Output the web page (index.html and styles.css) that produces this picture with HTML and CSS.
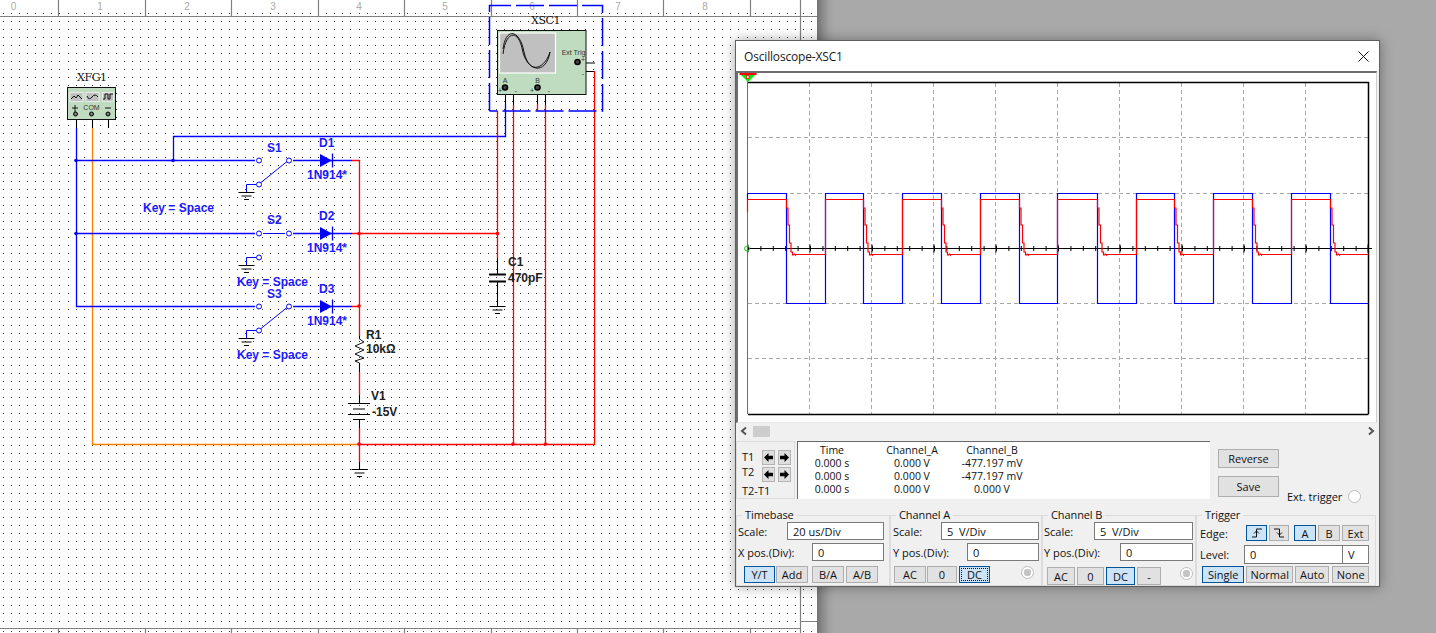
FILE: index.html
```html
<!DOCTYPE html>
<html lang="en">
<head>
<meta charset="utf-8">
<title>Oscilloscope-XSC1</title>
<link rel="stylesheet" href="styles.css">
</head>
<body>
<div class="workspace">
  <svg class="canvas" width="817" height="633" viewBox="0 0 817 633" xmlns="http://www.w3.org/2000/svg">
    <defs>
      <pattern id="dots" width="97" height="8" patternUnits="userSpaceOnUse">
        <path class="dot" d="M3 5h1v1h-1zM11 5h1v1h-1zM19 5h1v1h-1zM27 5h1v1h-1zM35 5h1v1h-1zM43 5h1v1h-1zM51 5h1v1h-1zM59 5h1v1h-1zM68 5h1v1h-1zM76 5h1v1h-1zM84 5h1v1h-1zM92 5h1v1h-1z"/>
      </pattern>
      <g id="gnd">
        <path class="wk" d="M-8 .5H8M-5 4H5M-2.500 7.500H2.500"/>
      </g>
      <g id="diode">
        <path class="fill-blue" d="M0 -6.500V6.500L12 0z"/>
        <path class="wb" d="M12.500 -7V7"/>
      </g>
    </defs>
    <rect class="paper" width="817" height="633"/>
    <rect fill="url(#dots)" y="10" width="800" height="612"/>
    <rect fill="url(#dots)" x="801" y="10" width="16" height="612"/>
    <g transform="translate(0,2)"><rect fill="url(#dots)" y="627" width="817" height="6"/></g>

    <g class="rule">
      <path d="M0 16.500H817M800.500 0V633M0 628.500H800M801 621.500H817"/>
      <path d="M58.500 0V16M145.500 0V16M231.500 0V16M318.500 0V16M404.500 0V16M491.500 0V16M577.500 0V16M663.500 0V16M750.500 0V16"/>
      <path d="M58.500 629V633M145.500 629V633M231.500 629V633M318.500 629V633M404.500 629V633M491.500 629V633M577.500 629V633M663.500 629V633M750.500 629V633"/>
    </g>
    <g class="rulertext">
      <text x="13.500" y="10">0</text><text x="100" y="10">1</text><text x="187" y="10">2</text><text x="273" y="10">3</text><text x="359" y="10">4</text><text x="445" y="10">5</text><text x="532" y="10">6</text><text x="618" y="10">7</text><text x="705" y="10">8</text>
    </g>

    <!-- wires -->
    <path class="wo" d="M92.500 128V444.500H358"/>
    <path class="wb" d="M76.500 128V306.500H255M76.500 160.500H255M76.500 233.500H255M173.500 160.500V136.500H505.500V104"/>
    <path class="wb" d="M293 160.500H352M293 233.500H352M293 306.500H352"/>
    <path class="wr" d="M352 160.500H359.500V336M359.500 372V395M359.500 428V462M352 306.500H359.500M352 233.500H497.500M358 444.500H594.500V71M513.500 444.500V105M545.500 444.500V105M497.500 111V258M537.500 104V111"/>
    <path class="wk" d="M76.500 114V128M92.500 114V128M108.500 114V128M497.500 258V274M497.500 282V306M505.500 88V104M513.500 88V105M505.500 88H513.500M537.500 88V104M545.500 88V105M537.500 88H545.500M578.500 63H595M578.500 63V71.500H594M359.500 336V339M359.500 363V372M359.500 395V403M359.500 419V428M359.500 462V469"/>
    <!-- junctions -->
    <g class="fill-blue"><circle cx="76" cy="160.500" r="1.800"/><circle cx="76" cy="233.500" r="1.800"/><circle cx="173" cy="160.500" r="1.800"/></g>
    <g class="fill-red"><circle cx="359" cy="233.500" r="1.800"/><circle cx="359" cy="306" r="1.800"/><circle cx="359" cy="444" r="1.800"/><circle cx="513" cy="444" r="1.800"/><circle cx="545.500" cy="444" r="1.800"/><circle cx="497.500" cy="233.500" r="1.800"/></g>

    <!-- switches -->
    <g class="wbt">
      <path d="M261 182.500L287 161.500M261 328.500L287 307.500M263 233.500H285"/>
      <path d="M246.500 192V184.500H256M246.500 265V257.500H256M246.500 338V330.500H256"/>
      <circle class="term" cx="259" cy="160.500" r="2.500"/><circle class="term" cx="289" cy="160.500" r="2.500"/><circle class="term" cx="259" cy="184.500" r="2.500"/>
      <circle class="term" cx="259" cy="233.500" r="2.500"/><circle class="term" cx="289" cy="233.500" r="2.500"/><circle class="term" cx="259" cy="257.500" r="2.500"/>
      <circle class="term" cx="259" cy="306.500" r="2.500"/><circle class="term" cx="289" cy="306.500" r="2.500"/><circle class="term" cx="259" cy="330.500" r="2.500"/>
    </g>
    <use href="#gnd" x="246.500" y="192"/><use href="#gnd" x="246.500" y="265"/><use href="#gnd" x="246.500" y="338"/>
    <use href="#gnd" x="497.500" y="306"/><use href="#gnd" x="359.500" y="469"/>
    <use href="#diode" x="320" y="160.500"/><use href="#diode" x="320" y="233.500"/><use href="#diode" x="320" y="306.500"/>

    <!-- passive parts -->
    <path class="wkt" d="M359.500 339L364 342L355 346L364 350L355 354L364 358L355 361L359.500 363"/>
    <path class="wk2" d="M489 274.500H506M489 281.500H506"/>
    <path class="wk" d="M348 403.500H370M353 409H365M348 414.500H370M353 419.500H365"/>

    <!-- function generator -->
    <rect class="inst" x="67.500" y="87.500" width="48" height="32"/>
    <g class="instbtn"><rect x="70" y="92.500" width="13" height="9"/><rect x="86" y="92.500" width="13" height="9"/><rect x="102.500" y="92.500" width="11" height="9"/></g>
    <path class="wkt" d="M71 99L74 96L76 98L78 95L82 99M87 96Q89 101 92 97Q95 93 98 97M103 99H105V94H108V99H110V94H113"/>
    <path class="wkt" d="M72 108H78M75 105V114M105 108H111"/>
    <text class="tiny" x="91.500" y="110">COM</text>
    <g class="pin"><circle cx="75.500" cy="114" r="2"/><circle cx="91.500" cy="114" r="2"/><circle cx="108" cy="114" r="2"/></g>
    <text class="lab-serif" x="77" y="81">XFG1</text>

    <!-- oscilloscope icon -->
    <path class="sel" d="M489.500 111V5.500H602.500V111H489.500"/>
    <rect class="inst" x="497.500" y="30.500" width="88.500" height="64"/>
    <rect class="scr" x="499.500" y="33" width="56" height="40"/>
    <path class="wkt" d="M503 54C506 30 518 30 522 48C526 72 546 76 550 52M503 49C506 26 520 30 524 52C530 78 546 66 550 52"/>
    <text class="tiny" x="573.500" y="55">Ext Trig</text>
    <text class="tiny" x="505" y="83">A</text>
    <text class="tiny" x="537.500" y="83">B</text>
    <text class="tiny" x="500" y="93">+</text><text class="tiny" x="516" y="93">-</text>
    <text class="tiny" x="532" y="93">+</text><text class="tiny" x="549" y="93">-</text>
    <text class="tiny" x="583" y="62">+</text><text class="tiny" x="583" y="76">-</text>
    <g class="pinb"><circle cx="505" cy="87.500" r="2.500"/><circle cx="537.500" cy="87.500" r="2.500"/><circle cx="577.500" cy="62" r="2.500"/></g>
    <text class="lab-serif" x="531" y="24">XSC1</text>

    <!-- labels -->
    <g class="lab-blue">
      <text x="267" y="152">S1</text><text x="319" y="147">D1</text><text x="307" y="179">1N914*</text><text x="143" y="212">Key = Space</text>
      <text x="267" y="224">S2</text><text x="319" y="220">D2</text><text x="307" y="252">1N914*</text><text x="237" y="286">Key = Space</text>
      <text x="267" y="298">S3</text><text x="319" y="293">D3</text><text x="307" y="325">1N914*</text><text x="237" y="359">Key = Space</text>
    </g>
    <g class="lab-black">
      <text x="366" y="339">R1</text><text x="366" y="353">10kΩ</text><text x="371" y="400">V1</text><text x="372" y="416">-15V</text><text x="508" y="266">C1</text><text x="508" y="282">470pF</text>
    </g>
  </svg>
  <div class="desk"></div>
</div>

<section class="window">
  <header class="titlebar">
    <span>Oscilloscope-XSC1</span>
    <svg class="close" width="11" height="11" viewBox="0 0 11 11"><path d="M.5 .5L10.500 10.500M10.500 .5L.5 10.500"/></svg>
  </header>

  <div class="screen">
    <svg width="638" height="350" viewBox="738 73 638 350" xmlns="http://www.w3.org/2000/svg">
      <path class="griddash" d="M809.500 83V414M871.500 83V414M933.500 83V414M995.500 83V414M1057.500 83V414M1119.500 83V414M1181.500 83V414M1243.500 83V414M1305.500 83V414M748 137.500H1368M748 193.500H1368M748 303.500H1368M748 358.500H1368"/>
      <path class="plotframe" d="M748 82.500H1368.500V414M748 414.500H1368.500"/>
      <path class="tick-minor" d="M748 248.500H1368"/>
      <path class="tick-major" d="M748 248.500H1368"/>
      <path class="axis" d="M748 248.500H1372"/>
      <path class="mag" d="M747.500 78V414"/>
      <path class="trace-b" d="M747.500 199V193.500H786.500V303.500H825.500V193.500H863.500V303.500H902.500V193.500H941.500V303.500H980.500V193.500H1019.500V303.500H1057.500V193.500H1097.500V303.500H1136.500V193.500H1174.500V303.500H1213.500V193.500H1252.500V303.500H1291.500V193.500H1330.500V303.500H1368.500"/>
      <path class="trace-a" d="M747.500 212V199.500H786.500V208h1.500V225h1.500V243h1.500V252h1.500V255h1l1 -1l1 1V254.500H825.500V199.500H863.500V208h1.500V225h1.500V243h1.500V252h1.500V255h1l1 -1l1 1V254.500H902.500V199.500H941.500V208h1.500V225h1.500V243h1.500V252h1.500V255h1l1 -1l1 1V254.500H980.500V199.500H1019.500V208h1.500V225h1.500V243h1.500V252h1.500V255h1l1 -1l1 1V254.500H1057.500V199.500H1097.500V208h1.500V225h1.500V243h1.500V252h1.500V255h1l1 -1l1 1V254.500H1136.500V199.500H1174.500V208h1.500V225h1.500V243h1.500V252h1.500V255h1l1 -1l1 1V254.500H1213.500V199.500H1252.500V208h1.500V225h1.500V243h1.500V252h1.500V255h1l1 -1l1 1V254.500H1291.500V199.500H1330.500V208h1.500V225h1.500V243h1.500V252h1.500V255h1l1 -1l1 1V254.500H1368.500"/>
      <circle class="trigmark" cx="747" cy="248.500" r="2.500"/>
      <path class="mk-green" d="M740 74H756L748 82z"/>
      <path class="mk-red" d="M739.500 74H756.500"/>
      <rect class="mk-box" x="746.500" y="75.500" width="2.500" height="3"/>
    </svg>
  </div>

  <div class="hscroll">
    <svg width="10" height="10" viewBox="0 0 10 10"><path class="chev" d="M7 1.500L3 5L7 8.500"/></svg>
    <span class="thumb"></span>
    <svg class="hscroll-right" width="10" height="10" viewBox="0 0 10 10"><path class="chev" d="M3 1.500L7 5L3 8.500"/></svg>
  </div>

  <div class="mid">
    <div class="cursors">
      <div class="cursor-row">
        <span>T1</span>
        <button class="arrow"><svg width="10" height="10" viewBox="0 0 10 10"><path d="M0 5L5 0V3H10V7H5V10z"/></svg></button>
        <button class="arrow"><svg width="10" height="10" viewBox="0 0 10 10"><path d="M10 5L5 0V3H0V7H5V10z"/></svg></button>
      </div>
      <div class="cursor-row">
        <span>T2</span>
        <button class="arrow"><svg width="10" height="10" viewBox="0 0 10 10"><path d="M0 5L5 0V3H10V7H5V10z"/></svg></button>
        <button class="arrow"><svg width="10" height="10" viewBox="0 0 10 10"><path d="M10 5L5 0V3H0V7H5V10z"/></svg></button>
      </div>
      <div class="cursor-diff">T2-T1</div>
    </div>
    <div class="readout">
      <span>Time</span><span>Channel_A</span><span>Channel_B</span>
      <span>0.000 s</span><span>0.000 V</span><span>-477.197 mV</span>
      <span>0.000 s</span><span>0.000 V</span><span>-477.197 mV</span>
      <span>0.000 s</span><span>0.000 V</span><span>0.000 V</span>
    </div>
    <div class="side">
      <button class="btn side-btn">Reverse</button>
      <div class="side-low">
        <button class="btn side-btn save">Save</button>
        <div class="ext"><span>Ext. trigger</span><i class="led big"></i></div>
      </div>
    </div>
  </div>

  <div class="controls">
    <fieldset class="group g-time">
      <legend>Timebase</legend>
      <div class="row"><label>Scale:</label><input class="field f97" value="20 us/Div"></div>
      <div class="row r2"><label>X pos.(Div):</label><input class="field f72" value="0"></div>
      <div class="btns btns-time">
        <button class="btn on">Y/T</button><button class="btn">Add</button><button class="btn">B/A</button><button class="btn">A/B</button>
      </div>
    </fieldset>
    <fieldset class="group g-a">
      <legend>Channel A</legend>
      <div class="row"><label>Scale:</label><input class="field f98" value="5  V/Div"></div>
      <div class="row r2"><label>Y pos.(Div):</label><input class="field f72" value="0"></div>
      <div class="btns btns-a">
        <button class="btn">AC</button><button class="btn">0</button><button class="btn on focus">DC</button><i class="led dot-led"></i>
      </div>
    </fieldset>
    <fieldset class="group g-b">
      <legend>Channel B</legend>
      <div class="row"><label>Scale:</label><input class="field f99" value="5  V/Div"></div>
      <div class="row r2"><label>Y pos.(Div):</label><input class="field f73" value="0"></div>
      <div class="btns btns-b">
        <button class="btn">AC</button><button class="btn">0</button><button class="btn on">DC</button><button class="btn">-</button><i class="led dot-led"></i>
      </div>
    </fieldset>
    <fieldset class="group g-trig">
      <legend>Trigger</legend>
      <div class="row edge-row">
        <label>Edge:</label>
        <div class="edge-btns">
          <button class="btn on"><svg width="12" height="10" viewBox="0 0 12 10"><path d="M1 9H5.500V1H11M3 5.500L5.500 3L8 5.500"/></svg></button>
          <button class="btn"><svg width="12" height="10" viewBox="0 0 12 10"><path d="M1 1H6.500V9H11M4 4.500L6.500 7L9 4.500"/></svg></button>
          <button class="btn on">A</button><button class="btn">B</button><button class="btn">Ext</button>
        </div>
      </div>
      <div class="row level-row">
        <label>Level:</label>
        <div class="level-fields"><input class="field f-level" value="0"><input class="field f-unit" value="V"></div>
      </div>
      <div class="btns btns-trig">
        <button class="btn on">Single</button><button class="btn">Normal</button><button class="btn">Auto</button><button class="btn">None</button>
      </div>
    </fieldset>
  </div>
</section>
</body>
</html>
```
FILE: styles.css
```css
* { box-sizing: border-box; }
html, body { margin: 0; height: 633px; overflow: hidden; }
body { font-family: "Open Sans", "Noto Sans", sans-serif; font-size: 11px; color: #111; background: #a9a9a9; }

.workspace { display: flex; height: 633px; }
.canvas { flex: none; display: block; }
.desk { flex: 1; background: linear-gradient(90deg, #737373 0, #8c8c8c 6px, #a0a0a0 12px, #a9a9a9 18px); }

.paper { fill: #fff; }
.dot { fill: #333; shape-rendering: crispEdges; }
.rule path { fill: none; stroke: #808080; stroke-width: 1.2; }
.rulertext text { font: 10px "Liberation Sans", sans-serif; fill: #aaa; text-anchor: middle; }

.wb, .wr, .wo, .wk, .wbt, .wkt, .wk2, .sel { fill: none; }
.wb { stroke: #0000ff; stroke-width: 1.3; }
.wbt { stroke: #0000ff; stroke-width: 1; }
.wr { stroke: #ff0000; stroke-width: 1.3; }
.wo { stroke: #ff8000; stroke-width: 1.3; }
.wk { stroke: #000; stroke-width: 1.1; }
.wkt { stroke: #111; stroke-width: 1; }
.wk2 { stroke: #000; stroke-width: 2; }
.fill-blue { fill: #0000ff; }
.fill-red { fill: #ff0000; }
.term { fill: #fff; stroke: #0000ff; }
.sel { stroke: #0000ff; stroke-width: 1.5; stroke-dasharray: 28 5; }
.inst { fill: #bfdcc0; stroke: #111; stroke-width: 1; }
.instbtn rect { fill: #c0c0c0; stroke: #f2f2f2; stroke-width: .8; }
.scr { fill: #c0c0c0; stroke: #fff; stroke-width: 1.2; }
.pin circle { fill: #7a7a7a; stroke: #000; stroke-width: 1; }
.pinb circle { fill: #444; stroke: #000; stroke-width: 1.6; }
.tiny { font: 7px "Liberation Sans", sans-serif; fill: #333; text-anchor: middle; }
.lab-serif { font: 11px "DejaVu Serif", "Liberation Serif", serif; fill: #111; letter-spacing: -.4px; }
.lab-blue text { font: bold 12px "Liberation Sans", sans-serif; fill: #1a1aff; }
.lab-black text { font: bold 12px "Liberation Sans", sans-serif; fill: #222; }

.window {
  position: absolute; left: 735px; top: 40px; width: 645px; height: 547px;
  background: #f0f0f0; border: 1px solid #5f5f5f;
  box-shadow: 0 0 12px rgba(0, 0, 0, .35);
  display: flex; flex-direction: column;
}
.titlebar {
  flex: none; height: 30px; background: #fff; display: flex; align-items: center;
  justify-content: space-between; padding: 0 10px 0 8px; font-size: 12px; letter-spacing: -.17px; color: #1a1a1a;
}
.close { display: block; }
.close path { fill: none; stroke: #111; stroke-width: 1; }

.screen {
  flex: none; height: 352px; margin: 0 2px 0 0; background: #fff;
  border-top: 2px solid #6d6d6d; border-left: 2px solid #6d6d6d; border-right: 1px solid #d0d0d0; border-bottom: 1px solid #e8e8e8;
}
.screen svg { display: block; }
.griddash { fill: none; stroke: #a8a8a8; stroke-width: 1; stroke-dasharray: 4 3; }
.plotframe { fill: none; stroke: #000; stroke-width: 1.5; }
.axis { fill: none; stroke: #000; stroke-width: 1.2; }
.tick-minor { fill: none; stroke: #000; stroke-width: 5; stroke-dasharray: 1 11.400; }
.tick-major { fill: none; stroke: #000; stroke-width: 8; stroke-dasharray: 1 61; stroke-dashoffset: -61.500; }
.mag { fill: none; stroke: #e020d0; stroke-width: 1; }
.trace-b { fill: none; stroke: #0000ff; stroke-width: 1.2; }
.trace-a { fill: none; stroke: #ff0000; stroke-width: 1.2; }
.trigmark { fill: none; stroke: #20c020; stroke-width: 1; }
.mk-green { fill: #00ee00; }
.mk-red { fill: none; stroke: #ff0000; stroke-width: 2; }
.mk-box { fill: #fff; stroke: #d02020; stroke-width: .8; }

.hscroll { flex: none; height: 14px; margin-top: 1px; display: flex; align-items: center; padding: 0 3px; position: relative; }
.chev { fill: none; stroke: #555; stroke-width: 2; }
.hscroll svg { display: block; }
.thumb { width: 17px; height: 11px; background: #cdcdcd; margin-left: 4px; }
.hscroll-right { margin-left: auto; }

.mid { flex: none; height: 58px; margin-top: 3px; display: flex; }
.cursors { flex: none; width: 59px; border: 1px solid #dcdcdc; padding: 7px 0 0 5px; }
.cursor-row { display: flex; align-items: center; height: 16px; margin-bottom: 1px; }
.cursor-row span { width: 21px; font-size: 11px; margin-top: -2px; }
.cursor-row + .cursor-row span { margin-top: -5px; }
.arrow { width: 14px; height: 15px; margin: 0 3px 0 0; padding: 0; border: 1px solid #b4b4b4; background: #dedede; display: flex; align-items: center; justify-content: center; }
.arrow svg { display: block; width: 9px; height: 9px; }
.arrow path { fill: #000; }
.cursor-diff { margin-top: 0; }

.readout {
  flex: none; width: 413px; margin-left: 2px; background: #fff; border-top: 1px solid #696969; border-left: 1px solid #696969;
  display: grid; grid-template-columns: 68px 92px 68px; grid-auto-rows: 13px; align-content: start; padding-top: 2px;
  text-align: center; line-height: 13px; font-size: 10.500px;
}
.side { flex: 1; padding: 8px 0 0 8px; }
.side-low { display: flex; align-items: flex-end; margin-top: 8px; }
.side-btn { width: 61px; height: 19px; }
.save { height: 21px; }
.ext { display: flex; align-items: center; margin-left: 8px; margin-bottom: -7px; }
.ext span { width: 61px; }

.btn { font: inherit; color: #111; padding: 0; background: #e1e1e1; border: 1px solid #adadad; line-height: 1; }
.btn.on { background: #cce4f7; border-color: #005499; }
.btn.focus { outline: 1px dotted #111; outline-offset: -3px; }
.btn svg { display: block; margin: auto; }
.btn svg path { fill: none; stroke: #111; stroke-width: 1; }

.led { display: block; border-radius: 50%; background: #fff; border: 1px solid #bdbdbd; }
.led.big { width: 13px; height: 13px; }
.dot-led { width: 13px; height: 13px; background: radial-gradient(circle, #c4c4c4 0 3.500px, #fff 4px); margin-left: auto; }

.controls { flex: none; height: 78px; margin-top: 9px; display: flex; }
.group { flex: none; margin: 0; padding: 0; border: 1px solid #dcdcdc; min-width: 0; height: 78px; }
.group legend { padding: 0 3px; line-height: 14px; font-size: 11px; letter-spacing: -.1px; }
.g-time { width: 154px; padding: 0 5px 0 1px; }
.g-time legend { margin-left: 4px; }
.g-a { width: 152px; padding: 0 2px 0 2px; }
.g-a legend { margin-left: 3px; }
.g-b { width: 154px; padding: 0 2px 0 1px; }
.g-b legend { margin-left: 4px; }
.g-trig { width: 180px; padding: 0 6px 0 3px; }
.g-trig legend { margin-left: 2px; }

.row { display: flex; justify-content: space-between; align-items: center; height: 18px; }
.r2 { margin-top: 3px; }
.field { font: inherit; color: #111; height: 18px; padding: 0 5px; border: 1px solid #7a7a7a; background: #fff; display: block; outline: 0; }
.f97 { width: 97px; }
.f98 { width: 98px; }
.f99 { width: 99px; }
.f72 { width: 72px; }
.f73 { width: 73px; }

.btns { display: flex; align-items: flex-start; height: 17px; margin-top: 5px; }
.btns .btn { height: 17px; }
.btns-time { padding-left: 6px; }
.btns-time .btn:nth-child(1) { width: 31px; }
.btns-time .btn:nth-child(2) { width: 32px; margin-left: 1px; }
.btns-time .btn:nth-child(3) { width: 32px; margin-left: 4px; }
.btns-time .btn:nth-child(4) { width: 32px; margin-left: 2px; }
.btns-a { padding-left: 1px; }
.btns-a .btn:nth-child(1) { width: 32px; }
.btns-a .btn:nth-child(2) { width: 30px; margin-left: 1px; }
.btns-a .btn:nth-child(3) { width: 31px; margin-left: 2px; }
.btns-a .dot-led { margin-right: 5px; }
.btns-b { padding-left: 3px; margin-top: 6px; }
.btns-b .btn { height: 18px; }
.btns-b .btn:nth-child(1) { width: 28px; }
.btns-b .btn:nth-child(2) { width: 27px; margin-left: 2px; }
.btns-b .btn:nth-child(3) { width: 29px; margin-left: 2px; }
.btns-b .btn:nth-child(4) { width: 24px; margin-left: 2px; }
.btns-b .dot-led { margin-right: 0; }

.edge-row { margin-top: 3px; height: 16px; justify-content: flex-start; }
.edge-row label { width: 46px; }
.edge-btns { display: flex; }
.edge-btns .btn { height: 16px; }
.edge-btns .btn:nth-child(1) { width: 21px; }
.edge-btns .btn:nth-child(2) { width: 20px; margin-left: 2px; }
.edge-btns .btn:nth-child(3) { width: 22px; margin-left: 5px; }
.edge-btns .btn:nth-child(4) { width: 22px; margin-left: 2px; }
.edge-btns .btn:nth-child(5) { width: 27px; margin-left: 2px; }
.level-row { margin-top: 4px; height: 19px; justify-content: flex-start; }
.level-row label { width: 44px; }
.level-fields { display: flex; }
.level-fields .field { height: 19px; }
.f-level { width: 99px; }
.f-unit { width: 27px; margin-left: -1px; }
.btns-trig { margin-top: 2px; padding-left: 2px; }
.btns-trig .btn:nth-child(1) { width: 43px; }
.btns-trig .btn:nth-child(2) { width: 47px; margin-left: 2px; }
.btns-trig .btn:nth-child(3) { width: 35px; margin-left: 2px; }
.btns-trig .btn:nth-child(4) { width: 37px; margin-left: 3px; }
```
